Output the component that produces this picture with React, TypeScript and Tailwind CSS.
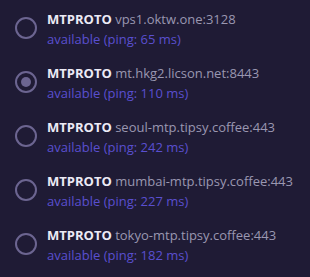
const PROXIES = [
  { host: 'vps1.oktw.one:3128', ping: 65, checked: false },
  { host: 'mt.hkg2.licson.net:8443', ping: 110, checked: true },
  { host: 'seoul-mtp.tipsy.coffee:443', ping: 242, checked: false },
  { host: 'mumbai-mtp.tipsy.coffee:443', ping: 227, checked: false },
  { host: 'tokyo-mtp.tipsy.coffee:443', ping: 182, checked: false },
];

function Radio({ checked }: { checked: boolean }) {
  return (
    <div className="w-[22px] h-[22px] shrink-0 rounded-full border-2 border-[#6c6591] flex items-center justify-center">
      {checked && <div className="w-[10px] h-[10px] rounded-full bg-[#6c6591]" />}
    </div>
  );
}

export default function App() {
  return (
    <div className="w-[310px] h-[277px] bg-[#1f1b35] pt-[1px] font-['Open_Sans',sans-serif] overflow-hidden">
      {PROXIES.map((p) => (
        <div key={p.host} className="h-[54px] flex items-center pl-[15px]">
          <Radio checked={p.checked} />
          <div className="ml-[10px] flex flex-col text-[13px] leading-[20px] mt-[2px]">
            <div className="whitespace-nowrap">
              <span className="font-bold text-[#eceaf5]">MTPROTO</span>{' '}
              <span className="text-[#9a97b1]">{p.host}</span>
            </div>
            <div className="text-[#5a4fcf]">available (ping: {p.ping} ms)</div>
          </div>
        </div>
      ))}
    </div>
  );
}
